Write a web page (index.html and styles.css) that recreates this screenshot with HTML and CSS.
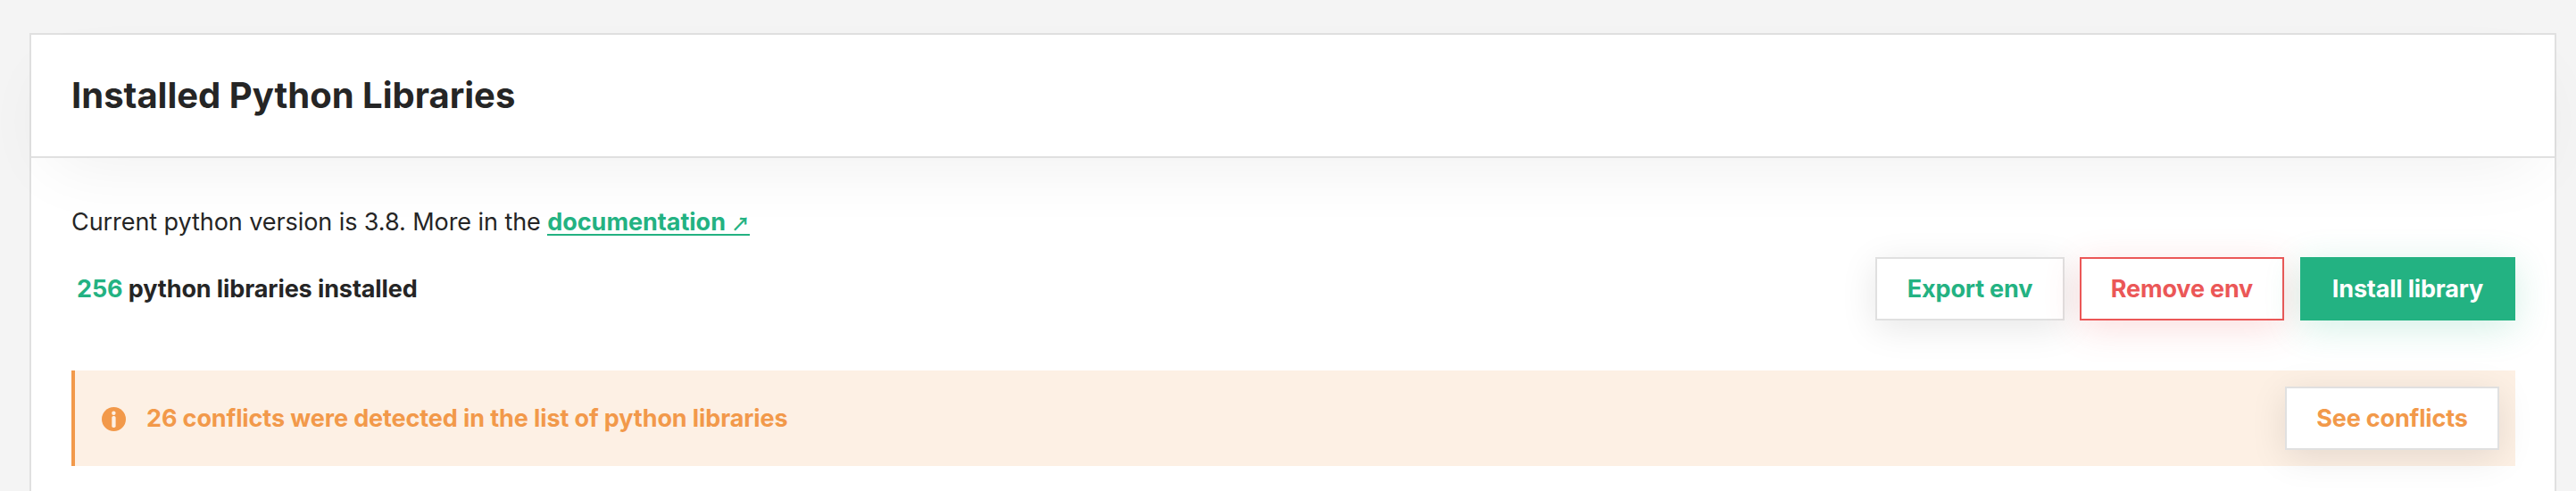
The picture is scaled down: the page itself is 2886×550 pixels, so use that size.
FILE: index.html
```
<!DOCTYPE html>
<html lang="en">
<head>
<meta charset="utf-8">
<title>Installed Python Libraries</title>
<link rel="stylesheet" href="styles.css">
</head>
<body>
<main class="card">
  <header class="card-header"><h1 class="title">Installed Python Libraries</h1></header>
  <section class="content">
    <p class="version">Current python version is 3.8. More in the <a class="doc-link" href="#">documentation <span class="arrow">↗</span></a></p>
    <div class="toolbar">
      <p class="count"><span class="count-value">256</span> python libraries installed</p>
      <div class="actions">
        <button class="btn btn-export">Export env</button>
        <button class="btn btn-remove">Remove env</button>
        <button class="btn btn-install">Install library</button>
      </div>
    </div>
    <div class="alert">
      <svg class="alert-icon" viewBox="0 0 27 27">
        <circle cx="13.5" cy="13.5" r="13.5" fill="#f2994a"/>
        <circle cx="13.4" cy="6.7" r="2.2" fill="#fdf0e4"/>
        <rect x="11.3" y="10" width="4.3" height="13" rx="1.8" fill="#fdf0e4"/>
      </svg>
      <span class="alert-text">26 conflicts were detected in the list of python libraries</span>
      <button class="btn btn-conflicts">See conflicts</button>
    </div>
  </section>
</main>
</body>
</html>
```
FILE: styles.css
```
* { box-sizing: border-box; }
body {
  margin: 0;
  height: 550px;
  padding: 37px 22px 0 33px;
  background: #f4f4f4;
  color: #252525;
  font: 400 27px/36px Inter, "Liberation Sans", sans-serif;
}
.card {
  height: 513px;
  border: 2px solid #e0e0e0;
  border-bottom: 0;
  background: #fff;
}
.card-header {
  display: flex;
  align-items: center;
  height: 138px;
  padding: 0 45px;
  border-bottom: 2px solid #e0e0e0;
  background: #fff;
  box-shadow: 0 28px 80px -22px rgba(0, 0, 0, .065);
}
.title { margin: 0; font-size: 40px; line-height: 48px; font-weight: 700; }
.content { padding: 54px 44px 0 45px; }
.version { height: 36px; margin: 0; letter-spacing: -.07px; }
.doc-link {
  display: inline-block;
  height: 33px;
  border-bottom: 2px solid #23b282;
  color: #23b282;
  font-weight: 700;
  letter-spacing: -.03px;
  text-decoration: none;
}
.arrow { font: 700 21px/20px "Noto Sans CJK JP", sans-serif; }
.toolbar {
  display: flex;
  justify-content: space-between;
  align-items: center;
  height: 71px;
  margin-top: 21px;
}
.count { margin: 0 0 0 6px; font-weight: 700; letter-spacing: -.1px; }
.count-value { color: #23b282; }
.actions { display: flex; }
.btn {
  height: 71px;
  padding: 0;
  border: 2px solid #e0e0e0;
  border-radius: 0;
  background: #fff;
  font: 700 27px/36px Inter, "Liberation Sans", sans-serif;
  letter-spacing: -.17px;
  box-shadow: 0 8px 40px rgba(0, 0, 0, .1);
}
.btn-export { width: 212px; margin-right: 17px; color: #23b282; }
.btn-remove { width: 229px; margin-right: 18px; color: #eb5757; border-color: #eb5757; box-shadow: 0 8px 40px rgba(235, 87, 87, .2); }
.btn-install { width: 241px; color: #fff; background: #23b282; border-color: #23b282; box-shadow: 0 8px 40px rgba(35, 178, 130, .2); }
.alert {
  display: flex;
  align-items: center;
  height: 107px;
  margin-top: 56px;
  padding: 0 18px 0 30px;
  border-left: 4px solid #f2994a;
  background: #fdf0e4;
  color: #f2994a;
  font-weight: 700;
  letter-spacing: -.11px;
}
.alert-icon { width: 27px; height: 27px; margin-top: 2px; }
.alert-text { margin-left: 23px; flex: 1; }
.btn-conflicts { width: 240px; color: #f2994a; }
```
